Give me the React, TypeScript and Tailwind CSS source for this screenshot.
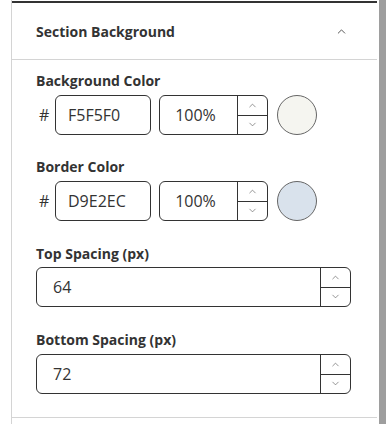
import { ChevronUp, ChevronDown } from 'lucide-react';

function Stepper() {
  return (
    <div className="flex w-[30px] shrink-0 flex-col border-l border-[#333]">
      <div className="flex flex-1 items-center justify-center border-b border-[#333]">
        <ChevronUp className="h-[11px] w-[11px] text-[#666]" strokeWidth={1.5} />
      </div>
      <div className="flex flex-1 items-center justify-center">
        <ChevronDown className="h-[11px] w-[11px] text-[#666]" strokeWidth={1.5} />
      </div>
    </div>
  );
}

function ColorRow({ hex, swatch }: { hex: string; swatch: string }) {
  return (
    <div className="flex h-[40px] items-center">
      <span className="w-[19px] pl-[3px] text-[16px] text-[#333]">#</span>
      <div className="flex h-full w-[96px] items-center rounded-[6px] border border-[#333] pl-[12px] text-[16px] text-[#333]">
        {hex}
      </div>
      <div className="ml-[8px] flex h-full w-[109px] overflow-hidden rounded-[6px] border border-[#333]">
        <div className="flex flex-1 items-center justify-center pr-[6px] text-[16px] text-[#333]">100%</div>
        <Stepper />
      </div>
      <div
        className="ml-[9px] h-[40px] w-[40px] rounded-full border border-[#666]"
        style={{ background: swatch }}
      />
    </div>
  );
}

function NumberField({ value }: { value: string }) {
  return (
    <div className="flex h-[40px] w-[315px] overflow-hidden rounded-[6px] border border-[#333]">
      <div className="flex flex-1 items-center pl-[16px] text-[16px] text-[#333]">{value}</div>
      <Stepper />
    </div>
  );
}

export default function App() {
  return (
    <div
      className="flex h-[424px] w-[386px] overflow-hidden bg-white"
      style={{ fontFamily: '"Open Sans", "Noto Sans", sans-serif' }}
    >
      <div className="ml-[11px] flex w-[366px] flex-col border-l border-[#d4d4d4]">
        <div className="mt-[1px] h-[2px] w-full bg-[#333]" />

        {/* ─── header ─── */}
        <div className="flex h-[57px] items-center justify-between border-b border-[#d4d4d4] pl-[24px] pr-[29px]">
          <span className="text-[14px] font-bold text-[#333]">Section Background</span>
          <ChevronUp className="h-[13px] w-[13px] text-[#333]" strokeWidth={1.5} />
        </div>

        {/* ─── fields ─── */}
        <div className="flex flex-col border-b border-[#d4d4d4] pb-[23px] pl-[24px] pt-[10px]">
          <div className="mb-[4px] pt-[1px] text-[14px] leading-[20px] font-bold text-[#333]">Background Color</div>
          <ColorRow hex="F5F5F0" swatch="#F5F5F0" />

          <div className="mb-[4px] mt-[21px] pt-[1px] text-[14px] leading-[20px] font-bold text-[#333]">Border Color</div>
          <ColorRow hex="D9E2EC" swatch="#D9E2EC" />

          <div className="mb-[3px] mt-[22px] pt-[1px] text-[14px] leading-[20px] font-bold text-[#333]">Top Spacing (px)</div>
          <NumberField value="64" />

          <div className="mb-[4px] mt-[22px] pt-[1px] text-[14px] leading-[20px] font-bold text-[#333]">Bottom Spacing (px)</div>
          <NumberField value="72" />
        </div>
      </div>
      <div className="ml-[2px] h-full w-[7px] bg-[#9e9e9e]" />
    </div>
  );
}
